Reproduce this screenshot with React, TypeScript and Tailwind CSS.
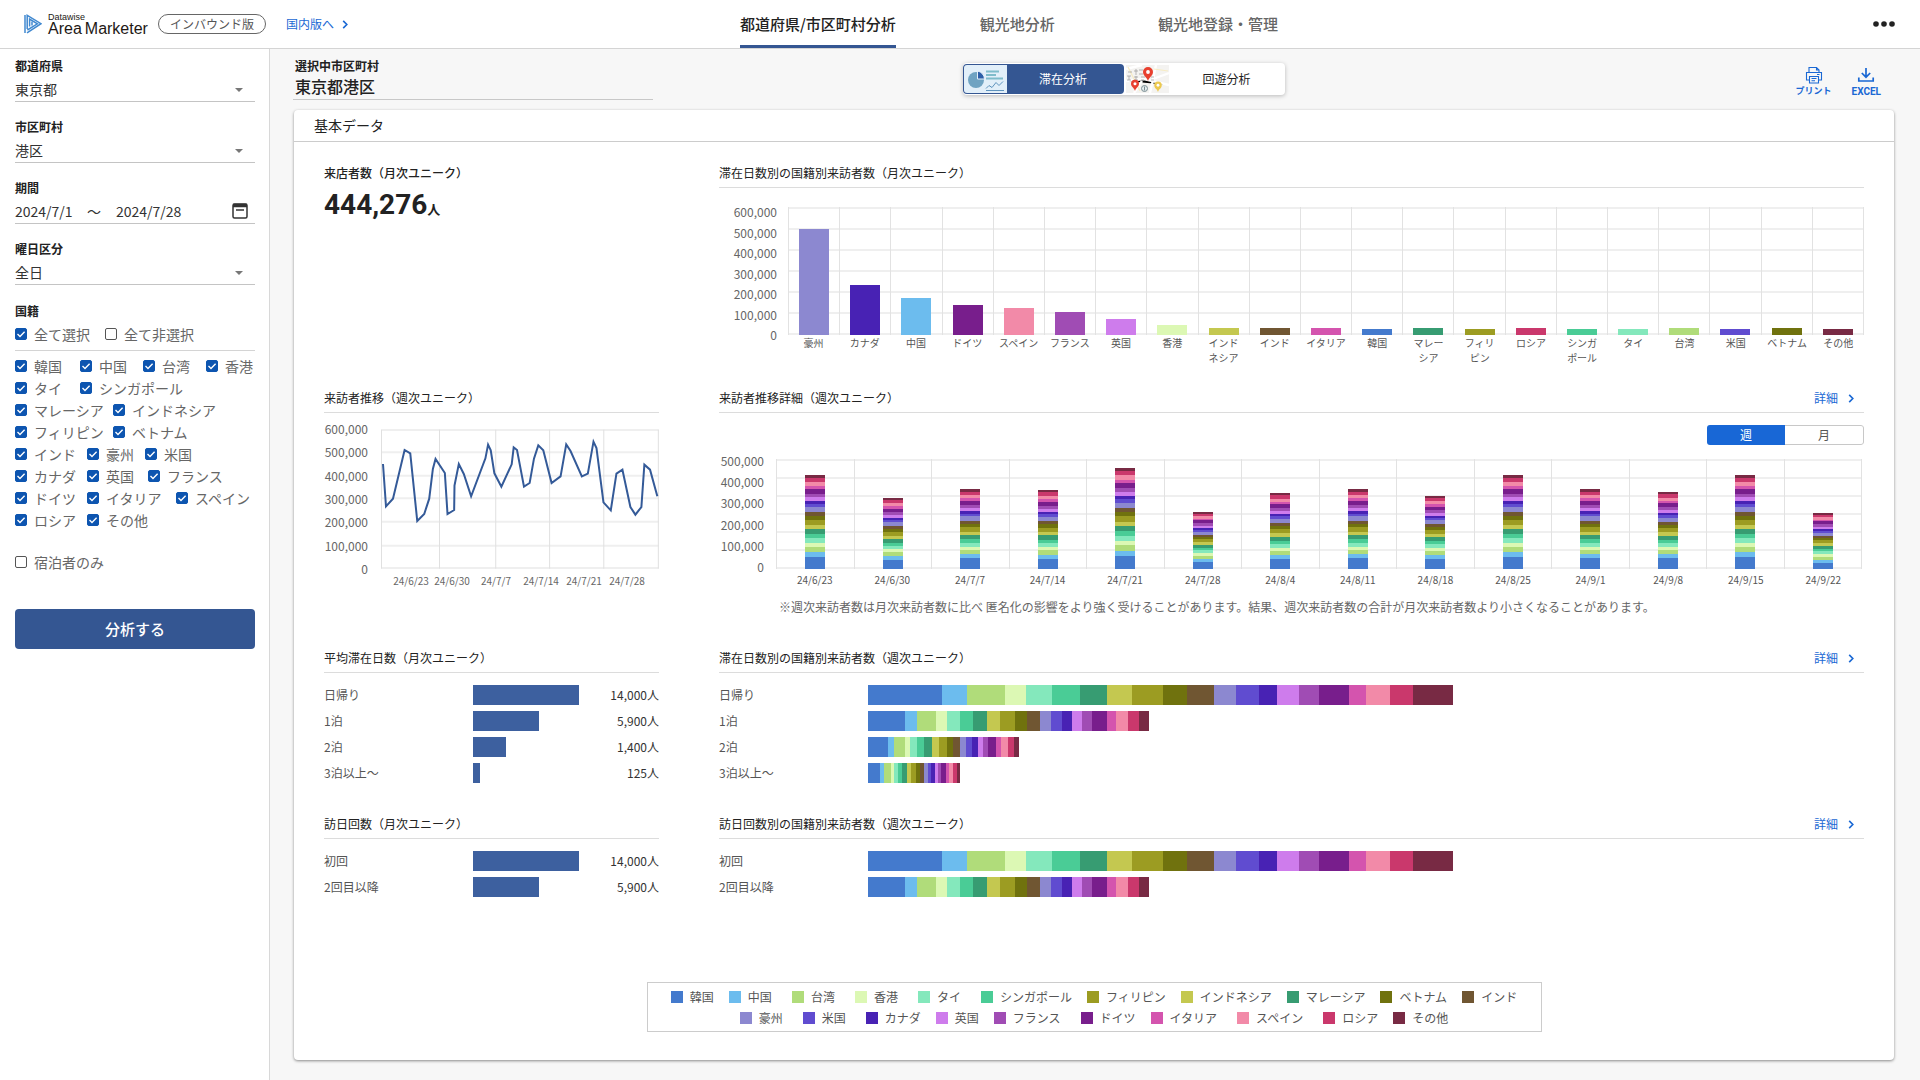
import React from "react";

const COLORS = {
  korea: "#447acd",
  china: "#6cbcee",
  taiwan: "#b0dc7a",
  hongkong: "#dcf8b4",
  thailand: "#84e8bc",
  singapore: "#4acc96",
  malaysia: "#379c72",
  indonesia: "#c4c850",
  philippines: "#9c9c22",
  vietnam: "#70720e",
  india: "#705632",
  australia: "#8c88d0",
  usa: "#604cd0",
  canada: "#4822b4",
  uk: "#ce7cec",
  france: "#a04cb4",
  germany: "#781e8c",
  italy: "#d454ae",
  spain: "#f28aa8",
  russia: "#ca386c",
  other: "#782a44",
};

const STACK = Object.values(COLORS);

type FilterItem = { label: string; width?: string };

const FILTER_ROWS: FilterItem[][] = [
  [{ label: "韓国", width: "w-[65px]" }, { label: "中国", width: "w-[63px]" }, { label: "台湾", width: "w-[63px]" }, { label: "香港" }],
  [{ label: "タイ", width: "w-[65px]" }, { label: "シンガポール" }],
  [{ label: "マレーシア", width: "w-[98px]" }, { label: "インドネシア" }],
  [{ label: "フィリピン", width: "w-[98px]" }, { label: "ベトナム" }],
  [{ label: "インド", width: "w-[72px]" }, { label: "豪州", width: "w-[58px]" }, { label: "米国" }],
  [{ label: "カナダ", width: "w-[72px]" }, { label: "英国", width: "w-[61px]" }, { label: "フランス" }],
  [{ label: "ドイツ", width: "w-[72px]" }, { label: "イタリア", width: "w-[89px]" }, { label: "スペイン" }],
  [{ label: "ロシア", width: "w-[72px]" }, { label: "その他" }],
];

const MONTHLY: { lines: string[]; height: number; color: string }[] = [
  { lines: ["豪州"], height: 106, color: COLORS.australia },
  { lines: ["カナダ"], height: 50, color: COLORS.canada },
  { lines: ["中国"], height: 37, color: COLORS.china },
  { lines: ["ドイツ"], height: 30, color: COLORS.germany },
  { lines: ["スペイン"], height: 27, color: COLORS.spain },
  { lines: ["フランス"], height: 23, color: COLORS.france },
  { lines: ["英国"], height: 16, color: COLORS.uk },
  { lines: ["香港"], height: 10, color: COLORS.hongkong },
  { lines: ["インド", "ネシア"], height: 7, color: COLORS.indonesia },
  { lines: ["インド"], height: 7, color: COLORS.india },
  { lines: ["イタリア"], height: 7, color: COLORS.italy },
  { lines: ["韓国"], height: 6, color: COLORS.korea },
  { lines: ["マレー", "シア"], height: 7, color: COLORS.malaysia },
  { lines: ["フィリ", "ピン"], height: 6, color: COLORS.philippines },
  { lines: ["ロシア"], height: 7, color: COLORS.russia },
  { lines: ["シンガ", "ポール"], height: 6, color: COLORS.singapore },
  { lines: ["タイ"], height: 6, color: COLORS.thailand },
  { lines: ["台湾"], height: 7, color: COLORS.taiwan },
  { lines: ["米国"], height: 6, color: COLORS.usa },
  { lines: ["ベトナム"], height: 7, color: COLORS.vietnam },
  { lines: ["その他"], height: 6, color: COLORS.other },
];

const WEEKLY: { date: string; parts: number[] }[] = [
  { date: "24/6/23", parts: [12, 5, 5, 4, 5, 4, 5, 4, 5, 4, 4, 5, 3, 3, 4, 3, 5, 3, 4, 4, 3] },
  { date: "24/6/30", parts: [9, 4, 4, 3, 3, 3, 4, 3, 4, 3, 3, 4, 2, 2, 3, 3, 3, 3, 3, 3, 2] },
  { date: "24/7/7", parts: [11, 4, 4, 3, 4, 4, 4, 3, 5, 3, 3, 5, 2, 3, 3, 3, 4, 3, 3, 3, 3] },
  { date: "24/7/14", parts: [10, 4, 5, 3, 4, 3, 5, 3, 4, 4, 3, 4, 3, 2, 3, 3, 4, 3, 3, 4, 2] },
  { date: "24/7/21", parts: [13, 5, 6, 4, 5, 5, 5, 4, 6, 4, 4, 5, 4, 3, 4, 4, 5, 3, 5, 4, 3] },
  { date: "24/7/28", parts: [7, 3, 3, 3, 3, 2, 3, 3, 3, 2, 2, 3, 2, 2, 2, 3, 3, 1, 3, 2, 2] },
  { date: "24/8/4", parts: [10, 4, 4, 3, 4, 3, 4, 4, 4, 3, 3, 4, 3, 2, 3, 3, 4, 2, 3, 4, 2] },
  { date: "24/8/11", parts: [11, 4, 4, 3, 4, 4, 4, 3, 5, 3, 3, 5, 2, 3, 3, 3, 4, 3, 3, 3, 3] },
  { date: "24/8/18", parts: [10, 4, 4, 3, 4, 3, 4, 3, 4, 3, 3, 4, 2, 2, 3, 3, 3, 3, 3, 3, 2] },
  { date: "24/8/25", parts: [12, 5, 5, 4, 5, 4, 5, 4, 5, 4, 4, 5, 3, 3, 4, 3, 5, 3, 4, 4, 3] },
  { date: "24/9/1", parts: [11, 4, 4, 3, 4, 4, 4, 3, 5, 3, 3, 5, 2, 3, 3, 3, 4, 3, 3, 3, 3] },
  { date: "24/9/8", parts: [11, 4, 4, 3, 4, 3, 4, 4, 4, 3, 3, 4, 3, 2, 3, 3, 4, 2, 3, 4, 2] },
  { date: "24/9/15", parts: [12, 5, 5, 4, 5, 4, 5, 4, 5, 4, 4, 5, 3, 3, 4, 3, 5, 3, 4, 4, 3] },
  { date: "24/9/22", parts: [6, 3, 3, 3, 3, 2, 3, 3, 3, 2, 2, 3, 2, 2, 2, 3, 3, 1, 3, 2, 2] },
];

const DAY_TRIP = [74, 25, 38, 21, 26, 28, 27, 25, 31, 24, 27, 22, 23, 18, 22, 20, 30, 17, 24, 23, 40];
const ONE_NIGHT = [37, 12, 19, 11, 13, 13, 14, 13, 15, 12, 13, 11, 11, 10, 10, 10, 15, 9, 12, 11, 10];
const TWO_NIGHTS = [20, 6, 11, 5, 7, 7, 8, 7, 8, 6, 7, 6, 6, 6, 5, 5, 8, 5, 7, 6, 5];
const THREE_NIGHTS = [12, 4, 7, 3, 4, 4, 5, 4, 5, 4, 4, 4, 3, 4, 3, 3, 5, 3, 4, 4, 3];

type LegendItem = { label: string; color: string; gap: string };

const LEGEND: LegendItem[][] = [
  [
    { label: "韓国", color: COLORS.korea, gap: "mr-[15px]" },
    { label: "中国", color: COLORS.china, gap: "mr-5" },
    { label: "台湾", color: COLORS.taiwan, gap: "mr-5" },
    { label: "香港", color: COLORS.hongkong, gap: "mr-5" },
    { label: "タイ", color: COLORS.thailand, gap: "mr-5" },
    { label: "シンガポール", color: COLORS.singapore, gap: "mr-[15px]" },
    { label: "フィリピン", color: COLORS.philippines, gap: "mr-[15px]" },
    { label: "インドネシア", color: COLORS.indonesia, gap: "mr-[15px]" },
    { label: "マレーシア", color: COLORS.malaysia, gap: "mr-[15px]" },
    { label: "ベトナム", color: COLORS.vietnam, gap: "mr-[15px]" },
    { label: "インド", color: COLORS.india, gap: "" },
  ],
  [
    { label: "豪州", color: COLORS.australia, gap: "mr-5" },
    { label: "米国", color: COLORS.usa, gap: "mr-5" },
    { label: "カナダ", color: COLORS.canada, gap: "mr-[15px]" },
    { label: "英国", color: COLORS.uk, gap: "mr-[15px]" },
    { label: "フランス", color: COLORS.france, gap: "mr-5" },
    { label: "ドイツ", color: COLORS.germany, gap: "mr-[15px]" },
    { label: "イタリア", color: COLORS.italy, gap: "mr-5" },
    { label: "スペイン", color: COLORS.spain, gap: "mr-5" },
    { label: "ロシア", color: COLORS.russia, gap: "mr-[15px]" },
    { label: "その他", color: COLORS.other, gap: "" },
  ],
];

function Chevron() {
  return (
    <svg viewBox="0 0 6 10" className="h-[9px] w-[6px]" fill="none" stroke="currentColor" strokeWidth="1.8">
      <path d="M1 1l4 4-4 4" />
    </svg>
  );
}

function Check({ label, checked = false, width = "" }: { label: string; checked?: boolean; width?: string }) {
  return (
    <label className={`flex h-[22px] shrink-0 items-center text-sm leading-5 whitespace-nowrap text-[#666] ${width}`}>
      <span className="mr-[7px] grid size-3 shrink-0">
        <input
          type="checkbox"
          defaultChecked={checked}
          className="peer col-start-1 row-start-1 size-3 appearance-none rounded-[2px] border border-[#555] bg-white checked:border-[#0d55b0] checked:bg-[#0d55b0]"
        />
        <svg viewBox="0 0 12 12" className="pointer-events-none col-start-1 row-start-1 hidden size-3 peer-checked:block" fill="none" stroke="#fff" strokeWidth="1.4">
          <path d="M2.5 6l2.5 2.4 4.6-4.6" />
        </svg>
      </span>
      {label}
    </label>
  );
}

function SelectField({ id, label, value }: { id: string; label: string; value: string }) {
  return (
    <div>
      <label htmlFor={id} className="block h-5 text-xs leading-5 font-bold">
        {label}
      </label>
      <div className="mt-0.5 grid h-6 items-start border-b border-[#c4c4c4]">
        <select id={id} className="col-start-1 row-start-1 h-[22px] w-full appearance-none bg-transparent text-sm leading-[22px] text-[#333]">
          <option>{value}</option>
        </select>
        <svg viewBox="0 0 8 4" className="pointer-events-none col-start-1 row-start-1 mr-3 h-1 w-2 self-center justify-self-end" fill="#777">
          <path d="M0 0h8L4 4z" />
        </svg>
      </div>
    </div>
  );
}

function Sidebar() {
  return (
    <aside className="w-[270px] shrink-0 border-r border-[#d8d8d8] bg-white px-[15px] pt-[7px] pr-[14px]">
      <div className="flex flex-col gap-[15px]">
        <SelectField id="pref" label="都道府県" value="東京都" />
        <SelectField id="city" label="市区町村" value="港区" />
        <div>
          <label htmlFor="from" className="block h-5 text-xs leading-5 font-bold">
            期間
          </label>
          <div className="mt-0.5 flex h-6 items-start border-b border-[#c4c4c4] text-sm leading-[22px] text-[#333]">
            <input id="from" defaultValue="2024/7/1" className="h-[22px] w-[72px] bg-transparent" />
            <span className="w-[29px]">〜</span>
            <input aria-label="終了日" defaultValue="2024/7/28" className="h-[22px] w-20 bg-transparent" />
            <button type="button" aria-label="カレンダー" className="mt-0.5 mr-[7px] ml-auto">
              <svg viewBox="0 0 16 17" className="h-[17px] w-4" fill="none" stroke="#333" strokeWidth="1.5">
                <rect x="1" y="2" width="14" height="14" rx="1.5" />
                <path d="M1 3.5h14" strokeWidth="3.5" />
                <path d="M4 8h8" />
              </svg>
            </button>
          </div>
        </div>
        <SelectField id="day" label="曜日区分" value="全日" />
      </div>
      <fieldset className="mt-4">
        <legend className="block h-5 text-xs leading-5 font-bold">国籍</legend>
        <div className="mt-0.5 flex border-b border-[#d4d4d4] pb-[5px]">
          <Check label="全て選択" checked width="w-[90px]" />
          <Check label="全て非選択" />
        </div>
        <div className="mt-1">
          {FILTER_ROWS.map((row) => (
            <div key={row[0].label} className="flex">
              {row.map((item) => (
                <Check key={item.label} label={item.label} checked width={item.width} />
              ))}
            </div>
          ))}
        </div>
      </fieldset>
      <div className="mt-5">
        <Check label="宿泊者のみ" />
      </div>
      <button type="button" className="mt-9 h-10 w-full rounded bg-[#345692] text-[15px] font-medium text-white">
        分析する
      </button>
    </aside>
  );
}

function Header() {
  return (
    <header className="flex h-[49px] items-stretch border-b border-[#d4d4d4] bg-white">
      <div className="flex w-[740px] items-center pl-6">
        <svg viewBox="0 0 18 20" className="h-5 w-[18px]" fill="none" stroke="#4189d0" strokeWidth="1.5">
          <path d="M1 19V1" />
          <path d="M3.2 15V1.4L17 9.7 3 18.8" />
          <path d="M5.6 12.6V5L13.4 9.8 3.4 16" />
          <path d="M8 11.5V7.5" />
        </svg>
        <div className="ml-1.5 text-[#231815]">
          <div className="font-[Liberation_Sans,sans-serif] text-[9px] leading-[8px]">Datawise</div>
          <div className="flex gap-[3px] font-[Liberation_Sans,sans-serif] text-base leading-[15px]">
            <span>Area</span>
            <span>Marketer</span>
          </div>
        </div>
        <span className="ml-2.5 flex h-5 items-center rounded-full border border-[#666] px-[11px] text-xs text-[#555]">インバウンド版</span>
        <a href="#domestic" className="ml-5 flex items-center gap-2 text-xs text-[#1a68d4]">
          国内版へ
          <Chevron />
        </a>
      </div>
      <nav className="flex text-[15px] leading-[48px] text-[#666]">
        <a href="#region" className="mr-[84px] h-12 border-b-3 border-[#345692] font-medium text-[#222]">
          都道府県/市区町村分析
        </a>
        <a href="#spots" className="mr-[103px] font-medium">
          観光地分析
        </a>
        <a href="#manage" className="font-medium">
          観光地登録・管理
        </a>
      </nav>
      <button type="button" aria-label="メニュー" className="mr-[25px] ml-auto">
        <svg viewBox="0 0 22 6" className="h-1.5 w-[22px]" fill="#222">
          <circle cx="3" cy="3" r="2.8" />
          <circle cx="11" cy="3" r="2.8" />
          <circle cx="19" cy="3" r="2.8" />
        </svg>
      </button>
    </header>
  );
}

function PieThumb() {
  return (
    <svg viewBox="0 0 43 28" className="h-7 w-[43px] shrink-0 rounded-l-[3px] bg-[#e2eff9]">
      <circle cx="12" cy="15" r="8" fill="#6fa3c2" />
      <path d="M13.500 14V6a8.500 8.500 0 0 1 7 8z" fill="#2d5fa8" stroke="#e2eff9" strokeWidth="1" />
      <path d="M22 6.500h13M22 10h10M22 13.500h17" stroke="#7fbccb" strokeWidth="2.2" />
      <path d="M22 23.500l3-3 3 2 4-5 3 3 4-4" fill="none" stroke="#5f93bd" strokeWidth="1" />
      <path d="M22 25.500h18" stroke="#5f93bd" strokeWidth="1" />
    </svg>
  );
}

function Pin({ x, y, s, color }: { x: number; y: number; s: number; color: string }) {
  return (
    <g transform={`translate(${x} ${y}) scale(${s})`}>
      <path d="M0 0C-1-4-5-5-5-9a5 5 0 0 1 10 0c0 4-4 5-5 9z" fill={color} />
      <circle cx="0" cy="-9" r="1.9" fill="#fff" />
    </g>
  );
}

function MapThumb() {
  return (
    <svg viewBox="0 0 43 28" className="h-7 w-[43px] shrink-0 bg-[#f4f3f1]">
      <path d="M0 4l16-4M0 16l18-2 25 6M30 0l-6 28M43 8l-16 6M8 28l8-12" stroke="#fff" strokeWidth="2.4" />
      <path d="M2 2l12 24M28 4l14 2" stroke="#f7ecc4" strokeWidth="1.2" />
      <path d="M2 7h4M8 6h4M10 4v6M13 5h4M13 9h4M1 11h4M3 11v4M1 15h4M8 12h4M8 15h4M10 11v5M15 12h4M15 15h3M25 12h3M25 15h3" stroke="#999" strokeWidth=".7" />
      <circle cx="18.500" cy="23.500" r="3" fill="#e4ecee" stroke="#7a8d92" strokeWidth="1" />
      <path d="M18.500 21.500v4" stroke="#7a8d92" />
      <Pin x={22} y={16} s={1} color="#e8402f" />
      <Pin x={9} y={26} s={0.8} color="#e8402f" />
      <Pin x={32} y={27} s={0.75} color="#ecc94f" />
    </svg>
  );
}

function Toolbar() {
  return (
    <div className="flex h-[61px] items-start">
      <div className="-ml-px w-[360px] border-b border-[#c8c8c8] pt-[7px] pl-0.5">
        <div className="text-xs leading-5 font-bold">選択中市区町村</div>
        <div className="h-[23px] text-base leading-5 font-medium">東京都港区</div>
      </div>
      <div className="mt-3.5 ml-[310px] flex w-[322px] overflow-hidden rounded bg-white py-px text-xs shadow-[0_1px_4px_rgba(0,0,0,0.25)]">
        <button type="button" className="flex h-[30px] flex-1 items-center rounded bg-[#345692] pl-px text-white">
          <PieThumb />
          <span className="flex-1 pl-2 text-left indent-6">滞在分析</span>
        </button>
        <button type="button" className="flex h-[30px] flex-1 items-center pl-0.5">
          <MapThumb />
          <span className="flex-1 pl-2.5 text-left indent-6">回遊分析</span>
        </button>
      </div>
      <div className="mt-[17px] mr-[13px] ml-auto flex gap-5 text-[#1a68d4]">
        <button type="button" className="flex flex-col items-center">
          <svg viewBox="0 0 18 18" className="size-[18px]" fill="none" stroke="currentColor" strokeWidth="1.1">
            <path d="M4 6V1.500h7.500L14 4v2M11.500 1.500V4H14" />
            <path d="M4 14H1.500V6.500h15V14H14" />
            <path d="M4.500 10.500h9v6.500h-9zM6.500 12.500h5M6.500 14.700h3.500M12 8.500h2.500" />
          </svg>
          <span className="text-[9px] leading-[14px] font-bold">プリント</span>
        </button>
        <button type="button" className="flex flex-col items-center">
          <svg viewBox="0 0 18 18" className="size-[18px]" fill="none" stroke="currentColor" strokeWidth="1.7">
            <path d="M9 2v9M4.800 7L9 11.200 13.200 7" />
            <path d="M1.800 11.500v3.500h14.400v-3.500" />
          </svg>
          <span className="font-[Roboto,sans-serif] text-[10px] leading-4 font-bold">EXCEL</span>
        </button>
      </div>
    </div>
  );
}

function SectionTitle({ title, link = false }: { title: string; link?: boolean }) {
  return (
    <div className="flex h-[26px] items-start border-b border-[#dcdcdc] text-xs leading-[22px]">
      <h3>{title}</h3>
      {link && (
        <a href="#detail" className="mr-2.5 ml-auto flex items-center gap-2.5 text-[#1a68d4]">
          詳細
          <Chevron />
        </a>
      )}
    </div>
  );
}

function AxisLabels({ values, className }: { values: string[]; className: string }) {
  return (
    <div className={`flex flex-col justify-between text-right text-xs leading-[18px] text-[#666] ${className}`}>
      {values.map((v) => (
        <span key={v}>{v}</span>
      ))}
    </div>
  );
}

function GridLines({ count }: { count: number }) {
  return (
    <div className="absolute inset-0 flex flex-col justify-between">
      {Array.from({ length: count }, (_, i) => (
        <div key={i} className="h-0.5 bg-[#efefef]" />
      ))}
    </div>
  );
}

function MonthlyChart() {
  return (
    <div className="mt-[19px] flex">
      <AxisLabels className="-mt-1 mr-[11px] h-[141px] w-[58px]" values={["600,000", "500,000", "400,000", "300,000", "200,000", "100,000", "0"]} />
      <div className="flex-1">
        <div className="relative h-32 border-r border-[#e2e2e2]">
          <GridLines count={7} />
          <div className="relative flex h-full">
            {MONTHLY.map((bar) => (
              <div key={bar.lines.join("")} className="flex flex-1 items-end justify-center border-l border-[#e2e2e2]">
                <div className="w-[30px]" style={{ height: bar.height, backgroundColor: bar.color }} />
              </div>
            ))}
          </div>
        </div>
        <div className="flex h-8">
          {MONTHLY.map((bar) => (
            <div key={bar.lines.join("")} className="w-0 flex-1 text-center text-[10px] leading-[15px] whitespace-nowrap text-[#555]">
              {bar.lines.map((line) => (
                <div key={line}>{line}</div>
              ))}
            </div>
          ))}
        </div>
      </div>
    </div>
  );
}

function TrendChart() {
  return (
    <div className="mt-[7px]">
      <div className="flex">
        <AxisLabels className="mr-[13px] h-[158px] w-11" values={["600,000", "500,000", "400,000", "300,000", "200,000", "100,000", "0"]} />
        <svg viewBox="243 148 836 420" preserveAspectRatio="none" className="mt-[9px] h-[140px] w-0 flex-1" fill="none">
          <g stroke="#efefef" strokeWidth="6">
            <path d="M244 151H1078M244 218H1078M244 288H1078M244 356H1078M244 426H1078M244 498H1078M244 565H1078" />
          </g>
          <g stroke="#e0e0e0" strokeWidth="3">
            <path d="M244.500 150V567M419 150V567M588 150V567M750 150V567M913 150V567M1077 150V567" />
          </g>
          <polyline
            stroke="#345a98"
            strokeWidth="6"
            points="249,253 258,380 279,357 314,211 331,221 352,424 373,403 388,357 399,268 407,238 435,280 443,403 463,391 464,318 477,253 492,283 514,350 557,236 565,195 573,212 584,281 605,321 636,254 642,203 652,211 673,321 690,310 703,237 716,197 731,212 756,310 783,290 800,194 813,214 847,290 865,282 882,186 891,205 912,368 934,392 951,282 969,270 993,382 1008,405 1026,382 1035,255 1052,270 1074,350"
          />
        </svg>
      </div>
      <div className="-mt-1 ml-[66px] flex text-center text-[10px] leading-[14px] text-[#666]">
        <span className="w-[42px]">24/6/23</span>
        <span className="w-10">24/6/30</span>
        <span className="w-12">24/7/7</span>
        <span className="w-[42px]">24/7/14</span>
        <span className="w-[44px]">24/7/21</span>
        <span className="w-[42px]">24/7/28</span>
      </div>
    </div>
  );
}

function WeeklyChart() {
  return (
    <div>
      <div className="mt-3 flex justify-end">
        <div className="flex h-5 w-[157px] overflow-hidden rounded-[3px] text-xs">
          <button type="button" className="flex-1 bg-[#1867d6] text-white">週</button>
          <button type="button" className="flex-1 rounded-r-[3px] border border-l-0 border-[#c8c8c8] text-[#555]">月</button>
        </div>
      </div>
      <div className="mt-1.5 mr-0.5 flex">
        <AxisLabels className="mt-px mr-3 h-[124px] w-[45px]" values={["500,000", "400,000", "300,000", "200,000", "100,000", "0"]} />
        <div className="mt-2 flex-1">
          <div className="relative h-[110px] border-r border-[#e2e2e2]">
            <GridLines count={7} />
            <div className="relative flex h-full">
              {WEEKLY.map((bar) => (
                <div key={bar.date} className="flex flex-1 flex-col-reverse items-center border-l border-[#e2e2e2]">
                  {bar.parts.map((h, i) => (
                    <div key={STACK[i]} className="w-5" style={{ height: h, backgroundColor: STACK[i] }} />
                  ))}
                </div>
              ))}
            </div>
          </div>
          <div className="mt-1 flex">
            {WEEKLY.map((bar) => (
              <div key={bar.date} className="flex-1 text-center text-[10px] leading-[14px] text-[#555]">
                {bar.date}
              </div>
            ))}
          </div>
        </div>
      </div>
      <p className="mt-2.5 ml-[60px] text-xs leading-5 text-[#666]">
        ※週次来訪者数は月次来訪者数に比べ 匿名化の影響をより強く受けることがあります。結果、週次来訪者数の合計が月次来訪者数より小さくなることがあります。
      </p>
    </div>
  );
}

function CountRows({ rows }: { rows: { label: string; width: number; value: string }[] }) {
  return (
    <div className="mt-3 flex flex-col gap-1.5 text-xs leading-5">
      {rows.map((r) => (
        <div key={r.label} className="flex h-5">
          <span className="w-[149px] text-[#555]">{r.label}</span>
          <div className="h-5 bg-[#3d609f]" style={{ width: r.width }} />
          <span className="ml-auto text-[#333]">{r.value}</span>
        </div>
      ))}
    </div>
  );
}

function StackRows({ rows }: { rows: { label: string; parts: number[] }[] }) {
  return (
    <div className="mt-3 flex flex-col gap-1.5 text-xs leading-5">
      {rows.map((r) => (
        <div key={r.label} className="flex h-5">
          <span className="w-[149px] text-[#555]">{r.label}</span>
          {r.parts.map((w, i) => (
            <div key={STACK[i]} className="h-5" style={{ width: w, backgroundColor: STACK[i] }} />
          ))}
        </div>
      ))}
    </div>
  );
}

function Legend() {
  return (
    <div className="mx-auto mt-[85px] flex h-[50px] w-[895px] flex-col justify-center gap-[3px] border border-[#ccc] text-xs leading-[18px] text-[#555]">
      {LEGEND.map((row) => (
        <ul key={row[0].label} className="flex justify-center">
          {row.map((item) => (
            <li key={item.label} className={`flex items-center gap-[7px] ${item.gap}`}>
              <span className="size-3" style={{ backgroundColor: item.color }} />
              {item.label}
            </li>
          ))}
        </ul>
      ))}
    </div>
  );
}

export default function App() {
  return (
    <div className="flex min-h-screen flex-col bg-[#f7f7f7] font-['Noto_Sans_CJK_JP',sans-serif] text-[#222]">
      <Header />
      <div className="flex flex-1">
        <Sidebar />
        <main className="flex min-w-0 flex-1 flex-col pr-[26px] pb-5 pl-6">
          <Toolbar />
          <section className="flex-1 rounded bg-white pb-[27px] shadow-[0_1px_3px_rgba(0,0,0,0.45)]">
            <h2 className="h-8 border-b border-[#ccc] pl-5 text-sm leading-[30px]">基本データ</h2>
            <div className="grid grid-cols-[335px_minmax(0,1fr)] gap-x-[60px] px-[30px] pt-5">
              <div>
                <h3 className="text-xs leading-[22px] font-medium">来店者数（月次ユニーク）</h3>
                <p className="mt-[5px] leading-8 font-bold">
                  <span className="font-[Roboto,sans-serif] text-[28px]">444,276</span>
                  <span className="text-[13px]">人</span>
                </p>
              </div>
              <div>
                <SectionTitle title="滞在日数別の国籍別来訪者数（月次ユニーク）" />
                <MonthlyChart />
              </div>
              <div className="mt-5">
                <SectionTitle title="来訪者推移（週次ユニーク）" />
                <TrendChart />
              </div>
              <div className="mt-5">
                <SectionTitle title="来訪者推移詳細（週次ユニーク）" link />
                <WeeklyChart />
              </div>
              <div className="mt-[30px]">
                <SectionTitle title="平均滞在日数（月次ユニーク）" />
                <CountRows
                  rows={[
                    { label: "日帰り", width: 106, value: "14,000人" },
                    { label: "1泊", width: 66, value: "5,900人" },
                    { label: "2泊", width: 33, value: "1,400人" },
                    { label: "3泊以上〜", width: 7, value: "125人" },
                  ]}
                />
              </div>
              <div className="mt-[30px]">
                <SectionTitle title="滞在日数別の国籍別来訪者数（週次ユニーク）" link />
                <StackRows
                  rows={[
                    { label: "日帰り", parts: DAY_TRIP },
                    { label: "1泊", parts: ONE_NIGHT },
                    { label: "2泊", parts: TWO_NIGHTS },
                    { label: "3泊以上〜", parts: THREE_NIGHTS },
                  ]}
                />
              </div>
              <div className="mt-[30px]">
                <SectionTitle title="訪日回数（月次ユニーク）" />
                <CountRows
                  rows={[
                    { label: "初回", width: 106, value: "14,000人" },
                    { label: "2回目以降", width: 66, value: "5,900人" },
                  ]}
                />
              </div>
              <div className="mt-[30px]">
                <SectionTitle title="訪日回数別の国籍別来訪者数（週次ユニーク）" link />
                <StackRows
                  rows={[
                    { label: "初回", parts: DAY_TRIP },
                    { label: "2回目以降", parts: ONE_NIGHT },
                  ]}
                />
              </div>
            </div>
            <Legend />
          </section>
        </main>
      </div>
    </div>
  );
}
